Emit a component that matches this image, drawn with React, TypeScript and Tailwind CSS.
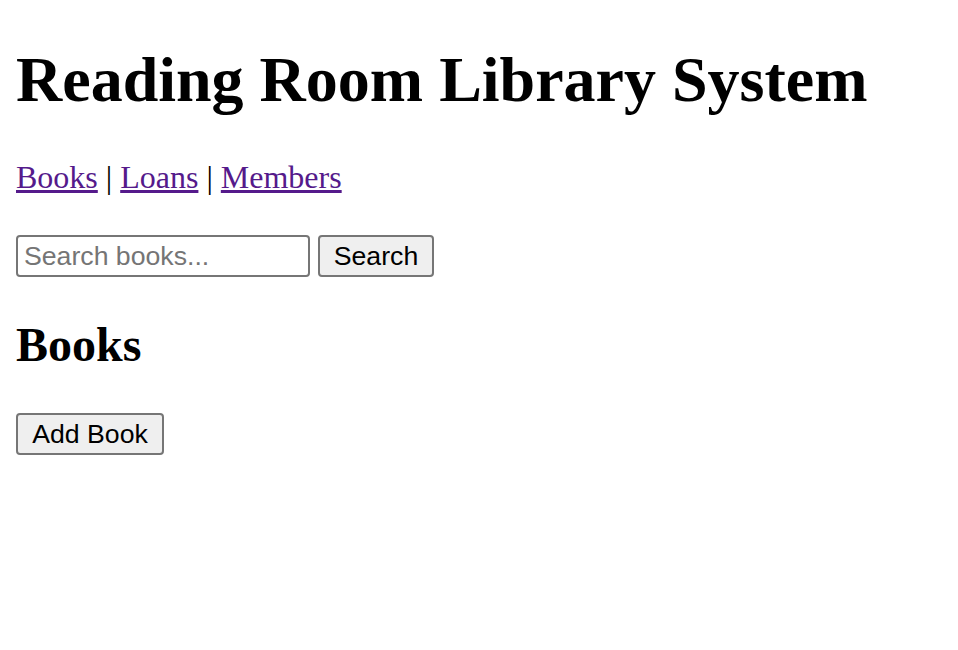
export default function App() {
  const serif = "font-['Liberation_Serif','Times_New_Roman',serif]";
  const sans = "font-['Liberation_Sans',Arial,sans-serif]";

  return (
    <div className={`${serif} text-black bg-white px-4 pt-[43px] pb-[194px]`}>
      <h1 className="mb-[42px] text-[64px] leading-[74px] font-bold">
        Reading Room Library System
      </h1>

      <p className="text-[32px] leading-[37px]">
        <a href="#books" className="text-[#551a8b] underline">Books</a>
        {' | '}
        <a href="#loans" className="text-[#551a8b] underline">Loans</a>
        {' | '}
        <a href="#members" className="text-[#551a8b] underline">Members</a>
      </p>

      <form className="mt-[39px] flex items-center gap-2" onSubmit={(e) => e.preventDefault()}>
        <input
          type="text"
          placeholder="Search books..."
          className={`${sans} w-[294px] h-[42px] px-[6px] border-2 border-[#767676] rounded-[4px] text-[26.67px] placeholder:text-[#757575] outline-none`}
        />
        <button
          type="submit"
          className={`${sans} w-[116px] h-[42px] border-2 border-[#767676] rounded-[4px] bg-[#efefef] text-[26.67px] leading-none`}
        >
          Search
        </button>
      </form>

      <h2 className="mt-[40px] text-[48px] leading-[55px] font-bold">Books</h2>

      <div className="mt-[41px]">
        <button
          type="button"
          className={`${sans} w-[148px] h-[42px] border-2 border-[#767676] rounded-[4px] bg-[#efefef] text-[26.67px] leading-none`}
        >
          Add Book
        </button>
      </div>
    </div>
  );
}
